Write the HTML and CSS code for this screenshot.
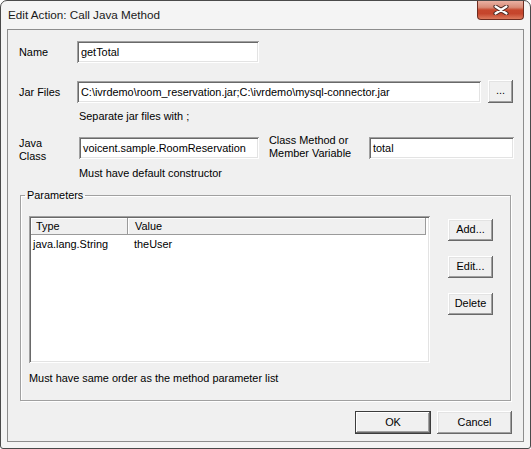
FILE: index.html
```html
<!DOCTYPE html>
<html lang="en">
<head>
    <meta charset="UTF-8">
    <title>Edit Action: Call Java Method</title>
    <link rel="stylesheet" href="styles.css">
</head>
<body>
    <div class="window">
        <div class="titlebar">
            <span class="title">Edit Action: Call Java Method</span>
            <div class="close">
                <svg width="16" height="10" viewBox="0 0 16 10">
                    <path d="M2.5 1.5 L13.5 8.5 M13.5 1.5 L2.5 8.5" stroke="#4a2a24" stroke-width="4.2" stroke-linecap="round"/>
                    <path d="M2.5 1.5 L13.5 8.5 M13.5 1.5 L2.5 8.5" stroke="#ffffff" stroke-width="2.2" stroke-linecap="round"/>
                </svg>
            </div>
        </div>

        <div class="client">
            <div class="row row-name">
                <span class="lbl">Name</span>
                <div class="field name-field">getTotal</div>
            </div>

            <div class="row row-jar">
                <span class="lbl">Jar Files</span>
                <div class="field jar-field">C:\ivrdemo\room_reservation.jar;C:\ivrdemo\mysql-connector.jar</div>
                <div class="btn browse">...</div>
            </div>
            <p class="hint hint-jar">Separate jar files with ;</p>

            <div class="row row-class">
                <span class="lbl lbl-two">Java<br>Class</span>
                <div class="field class-field">voicent.sample.RoomReservation</div>
                <span class="lbl-method">Class Method or<br>Member Variable</span>
                <div class="field method-field">total</div>
            </div>
            <p class="hint hint-class">Must have default constructor</p>

            <fieldset class="group">
                <legend>Parameters</legend>
                <div class="group-body">
                    <div class="list">
                        <div class="list-head">
                            <div class="col col-type">Type</div>
                            <div class="col col-value">Value</div>
                        </div>
                        <div class="list-row">
                            <div class="cell cell-type">java.lang.String</div>
                            <div class="cell">theUser</div>
                        </div>
                    </div>
                    <div class="side-buttons">
                        <div class="btn side">Add...</div>
                        <div class="btn side">Edit...</div>
                        <div class="btn side">Delete</div>
                    </div>
                </div>
                <p class="hint hint-params">Must have same order as the method parameter list</p>
            </fieldset>

            <div class="footer">
                <div class="btn ok">OK</div>
                <div class="btn cancel">Cancel</div>
            </div>
        </div>
    </div>
</body>
</html>
```

FILE: styles.css
```css
body {
    margin: 0;
    background-color: #ffffff;
    font-family: "Liberation Sans", Arial, sans-serif;
    font-size: 10.9px;
    color: #000000;
}
.window {
    width: 531px;
    height: 449px;
    box-sizing: border-box;
    border: 1px solid #4a4a4a;
    border-radius: 7px 7px 3px 3px;
    background-color: #f4f4f4;
    padding: 0 6px 6px 6px;
}
.titlebar {
    display: flex;
    align-items: flex-start;
    height: 28px;
}
.title {
    font-size: 11.7px;
    line-height: 28px;
    padding-left: 1px;
    color: #1a1a1a;
}
.close {
    margin-left: auto;
    width: 45px;
    height: 18px;
    border: 1px solid #6e2c20;
    border-top: none;
    border-radius: 0 0 4px 4px;
    background: linear-gradient(#eab1a3 0%, #d88c78 35%, #c7472d 50%, #c5452c 70%, #dd7a5d 100%);
    display: flex;
    justify-content: center;
    align-items: center;
}
.client {
    height: 413px;
    box-sizing: border-box;
    border: 1px solid #8d8d8d;
    background-color: #f0f0f0;
}
.row {
    display: flex;
    align-items: center;
    padding-left: 11px;
}
.lbl {
    width: 58px;
}
.field {
    box-sizing: border-box;
    height: 22px;
    line-height: 18px;
    padding: 2px 4px 0 4px;
    background-color: #ffffff;
    white-space: nowrap;
    overflow: hidden;
    box-shadow: inset 1px 1px #a0a0a0, inset -1px -1px #ffffff, inset 2px 2px #696969, inset -2px -2px #e3e3e3;
}
.btn {
    box-sizing: border-box;
    background-color: #f0f0f0;
    text-align: center;
    box-shadow: inset -1px -1px #696969, inset 1px 1px #ffffff, inset -2px -2px #a0a0a0, inset 2px 2px #e3e3e3;
}
.row-name {
    margin-top: 11px;
}
.name-field {
    width: 182px;
}
.row-jar {
    margin-top: 17px;
}
.jar-field {
    width: 404px;
}
.browse {
    width: 25px;
    height: 23px;
    line-height: 21px;
    margin-left: 7px;
}
.hint {
    margin: 0;
    line-height: 13px;
}
.hint-jar {
    margin-top: 7px;
    padding-left: 71px;
}
.row-class {
    margin-top: 14px;
    align-items: flex-start;
}
.lbl-two {
    width: 60px;
    line-height: 13px;
}
.class-field {
    width: 180px;
}
.lbl-method {
    width: 100px;
    margin-left: 10px;
    margin-top: -3px;
    line-height: 13px;
}
.method-field {
    width: 145px;
}
.hint-class {
    margin-top: 4px;
    padding-left: 71px;
}
.group {
    margin: 9px 0 0 12px;
    width: 491px;
    box-sizing: border-box;
    padding: 0 0 15px 0;
    border: 1px solid #a0a0a0;
    box-shadow: 1px 1px 0 #ffffff, inset 1px 1px 0 #ffffff;
}
.group legend {
    margin-left: 4px;
    padding: 0 2px;
    line-height: 13px;
}
.group-body {
    display: flex;
    align-items: flex-start;
    margin-top: 14px;
    padding-left: 8px;
}
.list {
    width: 401px;
    height: 147px;
    box-sizing: border-box;
    background-color: #ffffff;
    padding: 2px;
    box-shadow: inset 1px 1px #a0a0a0, inset -1px -1px #ffffff, inset 2px 2px #696969, inset -2px -2px #e3e3e3;
}
.list-head {
    display: flex;
    height: 17px;
    width: 395px;
}
.col {
    box-sizing: border-box;
    background-color: #f0f0f0;
    line-height: 16px;
    box-shadow: inset -1px -1px #9a9a9a, inset 1px 1px #ffffff;
}
.col-type {
    width: 97px;
    padding-left: 5px;
}
.col-value {
    flex: 1;
    padding-left: 7px;
}
.list-row {
    display: flex;
    line-height: 16px;
    margin-top: 1px;
}
.cell-type {
    width: 101px;
    padding-left: 2px;
}
.side-buttons {
    display: flex;
    flex-direction: column;
    gap: 15px;
    margin-left: 18px;
    margin-top: 3px;
}
.side {
    width: 45px;
    height: 22px;
    line-height: 21px;
}
.hint-params {
    margin-top: 9px;
    padding-left: 8px;
}
.footer {
    display: flex;
    justify-content: flex-end;
    gap: 6px;
    margin-top: 10px;
    padding-right: 11px;
}
.ok,
.cancel {
    height: 23px;
    line-height: 22px;
}
.ok {
    width: 76px;
    box-shadow: inset 0 0 0 1px #3c3c3c, inset -2px -2px #696969, inset 2px 2px #ffffff, inset -3px -3px #a0a0a0;
}
.cancel {
    width: 75px;
}
```
